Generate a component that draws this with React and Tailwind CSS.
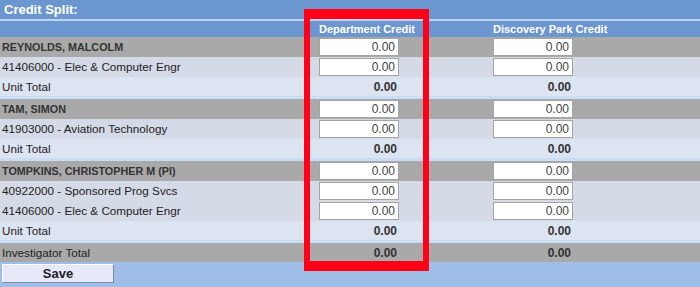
import React from 'react';

const groups = [
  {
    name: 'REYNOLDS, MALCOLM',
    units: ['41406000 - Elec & Computer Engr'],
  },
  {
    name: 'TAM, SIMON',
    units: ['41903000 - Aviation Technology'],
  },
  {
    name: 'TOMPKINS, CHRISTOPHER M (PI)',
    units: ['40922000 - Sponsored Prog Svcs', '41406000 - Elec & Computer Engr'],
  },
];

const CreditInput = () => (
  <input
    type="text"
    defaultValue="0.00"
    className="block h-[18px] w-[80px] border border-[#a4a4a4] bg-white pr-[3px] text-right text-[12px] text-[#444] outline-none"
  />
);

const Total = () => (
  <div className="w-[80px] pr-[2px] text-right text-[12px] font-bold text-[#333]">0.00</div>
);

const Row = ({ label, bg, bold, inputs, totals, h = 'h-[20px]', extra = '' }) => (
  <div className={`grid ${h} grid-cols-[319px_174px_1fr] items-center ${bg} ${extra}`}>
    <div className={`pl-[2px] ${bold ? 'text-[10.8px] font-bold text-[#333]' : 'text-[11.7px] text-[#222]'}`}>{label}</div>
    <div>
      {inputs && <CreditInput />}
      {totals && <Total />}
    </div>
    <div>
      {inputs && <CreditInput />}
      {totals && <Total />}
    </div>
  </div>
);

const App = () => {
  return (
    <div className="relative h-[287px] w-[700px] overflow-hidden bg-[#9ebde7] font-['Liberation_Sans',Arial,sans-serif]">
      <div className="flex h-[19px] items-center bg-[#6b96d0] pl-[4px] text-[13px] font-bold text-white">
        Credit Split:
      </div>
      <div className="h-[2px] bg-[#bcd3f1]" />
      <div className="grid h-[16px] grid-cols-[319px_174px_1fr] items-center bg-[#6b96d0] text-[11px] font-bold text-white">
        <div />
        <div>Department Credit</div>
        <div>Discovery Park Credit</div>
      </div>

      {groups.map((g) => (
        <div key={g.name}>
          <Row label={g.name} bg="bg-[#a9a9a9]" bold inputs />
          {g.units.map((u) => (
            <Row key={u} label={u} bg="bg-[#d5dbe6]" inputs />
          ))}
          <Row label="Unit Total" bg="bg-[#dce4f2]" totals h="h-[19px]" extra="box-content border-b-[3px] border-[#cadcf6]" />
        </div>
      ))}

      <Row label="Investigator Total" bg="bg-[#a9a9a9]" totals h="h-[19px]" />

      <div className="flex pl-[2px] pt-[2px]">
        <button className="h-[19px] w-[112px] border border-t-white border-l-white border-r-[#7f8aa8] border-b-[#7f8aa8] bg-[#e6e9f9] text-[13px] font-bold leading-none text-[#222]">
          Save
        </button>
      </div>

      <div className="pointer-events-none absolute left-[304px] top-[9px] h-[262px] w-[125px] border-x-[6px] border-y-[10px] border-[#ff0019]" />
    </div>
  );
};

export default App;
